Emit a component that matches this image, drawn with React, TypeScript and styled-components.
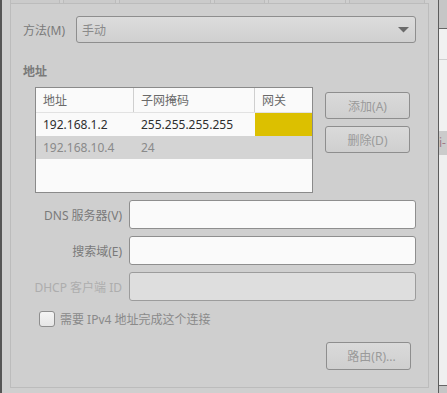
import styled, { createGlobalStyle } from 'styled-components';

const GlobalStyle = createGlobalStyle`
  html, body {
    margin: 0;
    padding: 0;
    background: #cfcfcf;
    font-family: "Noto Sans", "Noto Sans CJK SC", sans-serif;
    font-size: 12px;
  }
`;

const Screen = styled.div`
  display: flex;
  width: 447px;
  height: 393px;
  overflow: hidden;
`;

const Dialog = styled.div`
  width: 439px;
  height: 393px;
  box-sizing: border-box;
  flex-shrink: 0;
  background: #cfcfcf;
  border-left: 2px solid #555;
  border-right: 1px solid #5c5c5c;
  padding: 0 9px 0 8px;
  display: flex;
  flex-direction: column;
`;

const TabBar = styled.div`
  display: flex;
  gap: 3px;
  height: 3px;
  flex-shrink: 0;
`;

const Tab = styled.div<{ $w: number; $active?: boolean }>`
  width: ${(p) => p.$w}px;
  flex-shrink: 0;
  box-sizing: border-box;
  border-left: 1px solid #bcbcbc;
  border-right: 1px solid #bcbcbc;
  background: ${(p) => (p.$active ? '#cfcfcf' : '#cbcbcb')};
`;

const Frame = styled.div`
  height: 385px;
  box-sizing: border-box;
  border: 1px solid #bcbcbc;
  padding: 12px 12px 0 12px;
  display: flex;
  flex-direction: column;
`;

const MethodRow = styled.div`
  display: flex;
  align-items: center;
  gap: 11px;
  height: 27px;
`;

const Label = styled.span<{ $dim?: boolean }>`
  color: ${(p) => (p.$dim ? '#adadad' : '#7a7a7a')};
  white-space: nowrap;
`;

const Combo = styled.div`
  flex: 1;
  height: 27px;
  box-sizing: border-box;
  border: 1px solid #8e8e8e;
  border-radius: 3px;
  background: linear-gradient(#dcdcdc, #d0d0d0);
  display: flex;
  align-items: center;
  justify-content: space-between;
  padding: 0 5px 0 5px;
  color: #8a8a8a;
`;

const SectionTitle = styled.div`
  margin-top: 20px;
  height: 18px;
  line-height: 18px;
  font-weight: bold;
  color: #7a7a7a;
`;

const AddressBlock = styled.div`
  display: flex;
  gap: 12px;
  margin-top: 6px;
  padding-left: 12px;
`;

const Table = styled.div`
  width: 278px;
  height: 106px;
  box-sizing: border-box;
  border: 1px solid #8a8a8a;
  background: #fafafa;
  display: flex;
  flex-direction: column;
`;

const Row = styled.div<{ $shade?: boolean; $head?: boolean }>`
  display: grid;
  grid-template-columns: 98px 121px 1fr;
  height: ${(p) => (p.$head ? 24 : 23)}px;
  background: ${(p) => (p.$shade ? '#d4d4d4' : '#fafafa')};
  color: ${(p) => (p.$head ? '#6a6a6a' : p.$shade ? '#8a8a8a' : '#2e2e2e')};
  border-bottom: ${(p) => (p.$head ? '1px solid #e2e2e2' : 'none')};
`;

const Cell = styled.div<{ $line?: boolean; $fill?: string }>`
  display: flex;
  align-items: center;
  padding-left: 7px;
  white-space: nowrap;
  overflow: hidden;
  background: ${(p) => p.$fill ?? 'transparent'};
  border-right: ${(p) => (p.$line ? '1px solid #cfcfcf' : 'none')};
`;

const ButtonColumn = styled.div`
  display: flex;
  flex-direction: column;
  gap: 7px;
  padding-top: 5px;
`;

const Button = styled.div`
  width: 85px;
  height: 27px;
  box-sizing: border-box;
  border: 1px solid #8e8e8e;
  border-radius: 3px;
  background: linear-gradient(#dadada, #cfcfcf);
  color: #9a9a9a;
  display: flex;
  align-items: center;
  justify-content: center;
`;

const FieldGrid = styled.div`
  display: grid;
  grid-template-columns: 87px 1fr;
  column-gap: 7px;
  row-gap: 7px;
  margin-top: 7px;
  padding-left: 12px;
  align-items: center;
  justify-items: end;
`;

const Input = styled.div<{ $disabled?: boolean }>`
  justify-self: stretch;
  height: 29px;
  box-sizing: border-box;
  border: 1px solid ${(p) => (p.$disabled ? '#9c9c9c' : '#8e8e8e')};
  border-radius: 3px;
  background: ${(p) => (p.$disabled ? '#dedede' : '#fafafa')};
`;

const CheckRow = styled.label`
  display: flex;
  align-items: center;
  gap: 5px;
  margin-top: 10px;
  padding-left: 16px;
  height: 16px;
  color: #8a8a8a;
`;

const CheckBox = styled.span`
  width: 16px;
  height: 16px;
  box-sizing: border-box;
  border: 1px solid #8e8e8e;
  border-radius: 3px;
  background: linear-gradient(#f4f4f4, #e6e6e6);
`;

const RouteRow = styled.div`
  display: flex;
  justify-content: flex-end;
  margin-top: 15px;
  padding-right: 5px;
`;

const RouteButton = styled(Button)`
  height: 28px;
  padding-left: 6px;
`;

const Side = styled.div`
  flex: 1;
  display: flex;
  flex-direction: column;
  background: #f1f1f1;
`;

const SideTop = styled.div`
  height: 28px;
  background: #c6c6c6;
  border-bottom: 1px solid #666;
`;

const SideLine = styled.div`
  margin-top: 30px;
  border-top: 1px solid #cfcfcf;
`;

const SideChip = styled.div`
  margin-top: 71px;
  height: 24px;
  background: #cbcbcb;
  color: #a07a86;
  font-size: 12px;
  line-height: 24px;
  white-space: nowrap;
  overflow: hidden;
`;

const SideFill = styled.div`
  flex: 1;
  background: #efefef;
  border-bottom: 1px solid #666;
`;

const SideBottom = styled.div`
  height: 7px;
  background: #c6c6c6;
`;

const tabs = [
  { w: 50 },
  { w: 53 },
  { w: 92 },
  { w: 51 },
  { w: 78, active: true },
  { w: 76 },
];

export default function App() {
  return (
    <>
      <GlobalStyle />
      <Screen>
        <Dialog>
          <TabBar>
            {tabs.map((t, i) => (
              <Tab key={i} $w={t.w} $active={t.active} />
            ))}
          </TabBar>
          <Frame>
            <MethodRow>
              <Label>方法(M)</Label>
              <Combo>
                <span>手动</span>
                <svg width="12" height="6" viewBox="0 0 12 6">
                  <path d="M0 0 H11 L5.5 5.5 Z" fill="#6a6a6a" />
                </svg>
              </Combo>
            </MethodRow>

            <SectionTitle>地址</SectionTitle>

            <AddressBlock>
              <Table>
                <Row $head>
                  <Cell $line>地址</Cell>
                  <Cell $line>子网掩码</Cell>
                  <Cell>网关</Cell>
                </Row>
                <Row>
                  <Cell>192.168.1.2</Cell>
                  <Cell>255.255.255.255</Cell>
                  <Cell $fill="#dcc000" />
                </Row>
                <Row $shade>
                  <Cell>192.168.10.4</Cell>
                  <Cell>24</Cell>
                  <Cell />
                </Row>
              </Table>
              <ButtonColumn>
                <Button>添加(A)</Button>
                <Button>删除(D)</Button>
              </ButtonColumn>
            </AddressBlock>

            <FieldGrid>
              <Label>DNS 服务器(V)</Label>
              <Input />
              <Label>搜索域(E)</Label>
              <Input />
              <Label $dim>DHCP 客户端 ID</Label>
              <Input $disabled />
            </FieldGrid>

            <CheckRow>
              <CheckBox />
              <span>需要 IPv4 地址完成这个连接</span>
            </CheckRow>

            <RouteRow>
              <RouteButton>路由(R)...</RouteButton>
            </RouteRow>
          </Frame>
        </Dialog>
        <Side>
          <SideTop />
          <SideLine />
          <SideChip>i-</SideChip>
          <SideFill />
          <SideBottom />
        </Side>
      </Screen>
    </>
  );
}
